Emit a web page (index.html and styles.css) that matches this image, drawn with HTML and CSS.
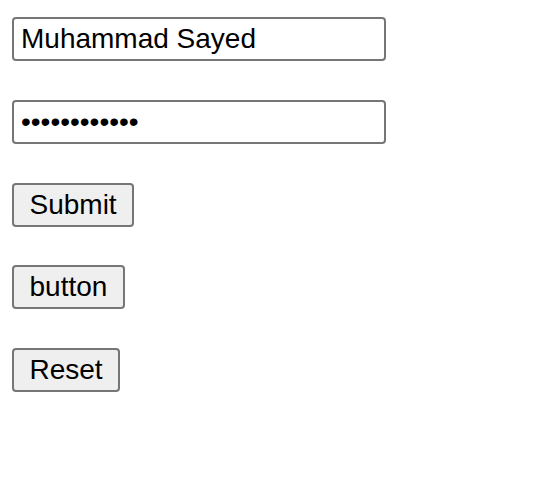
FILE: index.html
```html
<!DOCTYPE html>
<html>
<head>
<meta charset="utf-8">
<link rel="stylesheet" href="styles.css">
</head>
<body>
<form class="form">
  <input class="field" type="text" value="Muhammad Sayed">
  <input class="field" type="password" value="passwordpass">
  <div class="row"><button class="btn" type="submit">Submit</button></div>
  <div class="row"><button class="btn" type="button">button</button></div>
  <div class="row"><button class="btn" type="reset">Reset</button></div>
</form>
</body>
</html>
```

FILE: styles.css
```css
html, body {
  margin: 0;
  padding: 0;
  background: #ffffff;
}
.form {
  display: flex;
  flex-direction: column;
  align-items: flex-start;
  gap: 38.75px;
  padding: 17px 12px;
}
.row {
  display: flex;
}
.field {
  box-sizing: border-box;
  width: 374px;
  height: 44px;
  margin: 0;
  padding: 4px 7px;
  font-family: "Liberation Sans", Arial, sans-serif;
  font-size: 28px;
  line-height: 32px;
  color: #000;
  background: #fff;
  border: 2px solid #767676;
  border-radius: 4px;
  outline: none;
}
.btn {
  box-sizing: border-box;
  height: 44px;
  margin: 0;
  padding: 4px 15.5px;
  font-family: "Liberation Sans", Arial, sans-serif;
  font-size: 28px;
  line-height: 32px;
  color: #000;
  background: #efefef;
  border: 2px solid #767676;
  border-radius: 4px;
}
```
